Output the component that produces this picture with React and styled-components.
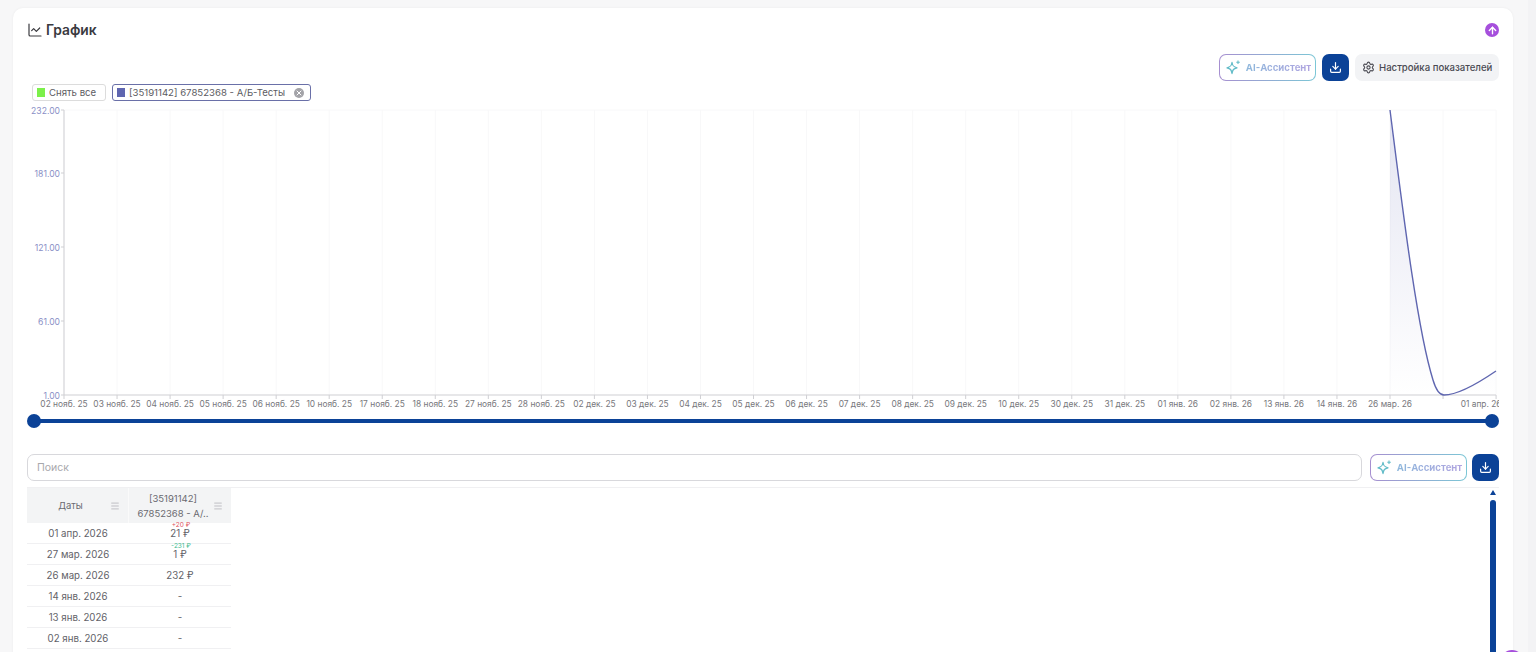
import React from 'react';
import styled, { createGlobalStyle } from 'styled-components';
import { ChartLine, Download, Settings, ArrowUp, Menu, X } from 'lucide-react';

const GlobalStyle = createGlobalStyle`
  html, body {
    margin: 0;
    height: 652px;
    overflow: hidden;
    background: #f7f7f8;
  }
  body {
    font-family: Inter, "Liberation Sans", sans-serif;
    color: #333;
  }
`;

const Page = styled.div`
  padding: 8px 23px 0 13px;
  height: 644px;
  overflow: hidden;
`;

const PageScrollTrack = styled.div`
  position: fixed;
  top: 0;
  right: 0;
  bottom: 0;
  width: 8px;
  background: #f3f3f5;
`;

const Card = styled.section`
  background: #fff;
  border-radius: 10px 10px 0 0;
  padding: 12px 14px 0;
  box-shadow: 0 0 3px rgba(0, 0, 0, 0.05);
  height: 640px;
  overflow: hidden;
`;

const TitleRow = styled.div`
  display: flex;
  justify-content: space-between;
  align-items: center;
  height: 20px;
`;

const Title = styled.h2`
  display: flex;
  align-items: center;
  gap: 3px;
  margin: 0;
  font-size: 13.8px;
  font-weight: 600;
  color: #3a3a3f;
`;

const CollapseButton = styled.button`
  display: flex;
  align-items: center;
  justify-content: center;
  width: 14px;
  height: 14px;
  padding: 0;
  border: 0;
  border-radius: 50%;
  background: #a64fdc;
  color: #fff;
`;

const Toolbar = styled.div`
  display: flex;
  justify-content: flex-end;
  gap: 6px;
  margin-top: 14px;
`;

const AiButton = styled.button`
  display: flex;
  align-items: center;
  justify-content: center;
  gap: 4px;
  width: 97px;
  height: 27px;
  padding: 0 0 0 1px;
  border: 1px solid transparent;
  border-radius: 7px;
  background:
    linear-gradient(#fff, #fff) padding-box,
    linear-gradient(90deg, #a78fd0, #7cc7d6) border-box;
  font: 700 9.6px Inter, sans-serif;
`;

const AiLabel = styled.span`
  background: linear-gradient(90deg, #8fb8dc, #b0a4e0);
  -webkit-background-clip: text;
  background-clip: text;
  color: transparent;
`;

const IconButton = styled.button`
  display: flex;
  align-items: center;
  justify-content: center;
  width: 27px;
  height: 27px;
  padding: 0;
  border: 0;
  border-radius: 7px;
  background: #0b4297;
  color: #fff;
`;

const SettingsButton = styled.button`
  display: flex;
  align-items: center;
  gap: 4px;
  height: 27px;
  width: 144px;
  padding: 0 0 0 7px;
  border: 0;
  border-radius: 7px;
  background: #f2f3f5;
  color: #4a4a52;
  font: 500 9.6px Inter, sans-serif;
  white-space: nowrap;
`;

const Legend = styled.div`
  display: flex;
  gap: 6px;
  margin: 3px 0 0 5px;
`;

const Chip = styled.div`
  display: flex;
  align-items: center;
  gap: 4px;
  box-sizing: border-box;
  height: 17px;
  padding: 0 ${p => (p.$active ? '6px' : '8px')} 0 3px;
  width: ${p => (p.$active ? '199px' : '74px')};
  border: 1px solid ${p => (p.$active ? '#6a70a8' : '#dcdcdc')};
  border-radius: 3px;
  font-size: 9.6px;
  color: #5c5c62;
  white-space: nowrap;
`;

const Swatch = styled.span`
  width: 8px;
  height: 9px;
  margin-left: 1px;
  background: ${p => p.$color};
`;

const ChipClose = styled.span`
  display: flex;
  align-items: center;
  justify-content: center;
  width: 10px;
  height: 10px;
  margin-left: auto;
  border-radius: 50%;
  background: #a3a3a8;
  color: #fff;
`;

const ChartSvg = styled.svg`
  display: block;
  width: 1472px;
  height: 306px;
  margin-top: 3px;
`;

const RangeSlider = styled.div`
  position: relative;
  height: 14px;
  margin: 4px 0 0 0;
`;

const RangeTrack = styled.div`
  position: absolute;
  left: 6px;
  right: 6px;
  top: 5px;
  height: 4px;
  background: #0b4297;
`;

const RangeThumb = styled.div`
  position: absolute;
  top: 0;
  ${p => p.$side}: 0;
  width: 14px;
  height: 14px;
  border-radius: 50%;
  background: #0b4297;
`;

const SearchRow = styled.div`
  display: flex;
  gap: 8px;
  margin-top: 26px;
  padding-bottom: 6px;
  border-bottom: 1px solid #f0f0f2;
`;

const SearchInput = styled.input`
  flex: 1;
  height: 27px;
  box-sizing: border-box;
  padding: 0 9px;
  border: 1px solid #d8d8dc;
  border-radius: 7px;
  font: 10.5px Inter, sans-serif;
  outline: none;
  &::placeholder {
    color: #a8a8ac;
  }
`;

const SearchActions = styled.div`
  display: flex;
  gap: 5px;
`;

const TableArea = styled.div`
  display: flex;
  justify-content: space-between;
`;

const Table = styled.div`
  display: grid;
  grid-template-columns: 102px 102px;
  align-content: start;
`;

const HeadCell = styled.div`
  position: relative;
  display: flex;
  align-items: center;
  justify-content: center;
  height: 35px;
  padding: 0 14px 0 0;
  background: #f3f4f5;
  font-size: 9.5px;
  line-height: 15px;
  text-align: center;
  color: #6a6a70;
  border-right: ${p => (p.$last ? '0' : '1px solid #fafafa')};
  box-sizing: border-box;
`;

const HeadMenu = styled(Menu)`
  position: absolute;
  right: 8px;
  top: 13px;
  color: #b5b5ba;
`;

const Cell = styled.div`
  position: relative;
  display: flex;
  align-items: center;
  justify-content: center;
  height: 21px;
  box-sizing: border-box;
  border-bottom: 1px solid #f0f0f2;
  font-size: 9.7px;
  color: #626268;
`;

const Delta = styled.span`
  position: absolute;
  top: -1px;
  left: 0;
  right: 0;
  padding-left: 2px;
  text-align: center;
  font-size: 6.5px;
  line-height: 6px;
  color: ${p => (p.$up ? '#e0525c' : '#3dbb8f')};
`;

const Scrollbar = styled.div`
  display: flex;
  flex-direction: column;
  align-items: center;
  width: 6px;
  margin-right: 3px;
  padding-top: 2px;
`;

const ScrollArrow = styled.div`
  width: 0;
  height: 0;
  border-left: 3px solid transparent;
  border-right: 3px solid transparent;
  border-bottom: 5px solid #0b4297;
`;

const ScrollThumb = styled.div`
  width: 6px;
  height: 170px;
  margin-top: 5px;
  border-radius: 3px 3px 0 0;
  background: #0b4297;
`;

const FloatingDot = styled.div`
  position: fixed;
  left: 1501px;
  top: 650px;
  width: 22px;
  height: 22px;
  border-radius: 50%;
  background: #a64fdc;
`;

const ticks = [
  '02 нояб. 25', '03 нояб. 25', '04 нояб. 25', '05 нояб. 25', '06 нояб. 25', '10 нояб. 25',
  '17 нояб. 25', '18 нояб. 25', '27 нояб. 25', '28 нояб. 25', '02 дек. 25', '03 дек. 25',
  '04 дек. 25', '05 дек. 25', '06 дек. 25', '07 дек. 25', '08 дек. 25', '09 дек. 25',
  '10 дек. 25', '30 дек. 25', '31 дек. 25', '01 янв. 26', '02 янв. 26', '13 янв. 26',
  '14 янв. 26', '26 мар. 26', '', '01 апр. 26',
];

const yTicks = [
  { label: '232.00', y: 6 },
  { label: '181.00', y: 69 },
  { label: '121.00', y: 143 },
  { label: '61.00', y: 217 },
  { label: '1.00', y: 291 },
];

const rows = [
  { date: '01 апр. 2026', value: '21 ₽', delta: '+20 ₽', up: true },
  { date: '27 мар. 2026', value: '1 ₽', delta: '-231 ₽' },
  { date: '26 мар. 2026', value: '232 ₽' },
  { date: '14 янв. 2026', value: '-' },
  { date: '13 янв. 2026', value: '-' },
  { date: '02 янв. 2026', value: '-' },
  { date: '01 янв. 2026', value: '-' },
];

const AXIS_X = 37;
const STEP = 53.04;
const tickX = i => AXIS_X + i * STEP;
// the last label does not sit on its tick, the chart edge cuts it
const labelX = i => (i === ticks.length - 1 ? tickX(i) - 15 : tickX(i));

const LINE = 'M1363 6 C1375 100 1390 225 1406 276 C1409 286 1412 291 1417 291 C1430 291 1450 280 1469 267';

const SparkIcon = () => (
  <svg width="17" height="17" viewBox="0 0 17 17" fill="none" stroke="#62bcc8" strokeWidth="1.3">
    <path d="M7 3.5 C7.6 7 8.6 8 12 8.8 C8.6 9.6 7.6 10.6 7 14.5 C6.4 10.6 5.4 9.6 2 8.8 C5.4 8 6.4 7 7 3.5 Z" strokeLinejoin="round" />
    <path d="M13 1.5 V5 M11.3 3.2 H14.8" strokeWidth="1.1" />
  </svg>
);

const AiAssistant = () => (
  <AiButton>
    <SparkIcon />
    <AiLabel>AI-Ассистент</AiLabel>
  </AiButton>
);

const Chart = () => (
  <ChartSvg viewBox="0 0 1472 306">
    <defs>
      <linearGradient id="area" x1="0" y1="0" x2="0" y2="1">
        <stop offset="0" stopColor="#5f66b0" stopOpacity="0.17" />
        <stop offset="1" stopColor="#5f66b0" stopOpacity="0" />
      </linearGradient>
    </defs>
    <line x1={AXIS_X} x2="1469" y1="6" y2="6" stroke="#f8f8f9" />
    {ticks.map((t, i) => (
      <g key={i}>
        <line x1={tickX(i)} x2={tickX(i)} y1="6" y2="291" stroke="#f8f8f9" />
        <line x1={tickX(i)} x2={tickX(i)} y1="291" y2="295" stroke="#cfcfd3" />
        <text x={labelX(i)} y="303" textAnchor="middle" fontSize="8.4" fill="#77777c">{t}</text>
      </g>
    ))}
    <line x1={AXIS_X} x2={AXIS_X} y1="6" y2="291" stroke="#cfcfd3" />
    <line x1={AXIS_X} x2="1469" y1="291" y2="291" stroke="#cfcfd3" />
    {yTicks.map(t => (
      <g key={t.label}>
        <line x1={AXIS_X - 3} x2={AXIS_X} y1={t.y} y2={t.y} stroke="#cfcfd3" />
        <text x={AXIS_X - 4} y={t.y + 4} textAnchor="end" fontSize="8.6" fill="#8a8fc6">{t.label}</text>
      </g>
    ))}
    <path d={`${LINE} V291 H1363 Z`} fill="url(#area)" />
    <path d={LINE} fill="none" stroke="#5f66b0" strokeWidth="1.4" />
  </ChartSvg>
);

const App = () => (
  <Page>
    <GlobalStyle />
    <PageScrollTrack />
    <Card>
      <TitleRow>
        <Title>
          <ChartLine size={16} strokeWidth={1.8} />
          График
        </Title>
        <CollapseButton>
          <ArrowUp size={11} strokeWidth={3} />
        </CollapseButton>
      </TitleRow>
      <Toolbar>
        <AiAssistant />
        <IconButton>
          <Download size={13} strokeWidth={2.2} />
        </IconButton>
        <SettingsButton>
          <Settings size={13} strokeWidth={2} />
          Настройка показателей
        </SettingsButton>
      </Toolbar>
      <Legend>
        <Chip>
          <Swatch $color="#7cf04a" />
          Снять все
        </Chip>
        <Chip $active>
          <Swatch $color="#5f66b0" />
          [35191142] 67852368 - А/Б-Тесты
          <ChipClose>
            <X size={8} strokeWidth={3} />
          </ChipClose>
        </Chip>
      </Legend>
      <Chart />
      <RangeSlider>
        <RangeTrack />
        <RangeThumb $side="left" />
        <RangeThumb $side="right" />
      </RangeSlider>
      <SearchRow>
        <SearchInput placeholder="Поиск" />
        <SearchActions>
          <AiAssistant />
          <IconButton>
            <Download size={13} strokeWidth={2.2} />
          </IconButton>
        </SearchActions>
      </SearchRow>
      <TableArea>
        <Table>
          <HeadCell>
            Даты
            <HeadMenu size={10} />
          </HeadCell>
          <HeadCell $last>
            [35191142]
            <br />
            67852368 - А/..
            <HeadMenu size={10} />
          </HeadCell>
          {rows.map(r => (
            <React.Fragment key={r.date}>
              <Cell>{r.date}</Cell>
              <Cell>
                {r.delta && <Delta $up={r.up}>{r.delta}</Delta>}
                {r.value}
              </Cell>
            </React.Fragment>
          ))}
        </Table>
        <Scrollbar>
          <ScrollArrow />
          <ScrollThumb />
        </Scrollbar>
      </TableArea>
    </Card>
    <FloatingDot />
  </Page>
);

export default App;
